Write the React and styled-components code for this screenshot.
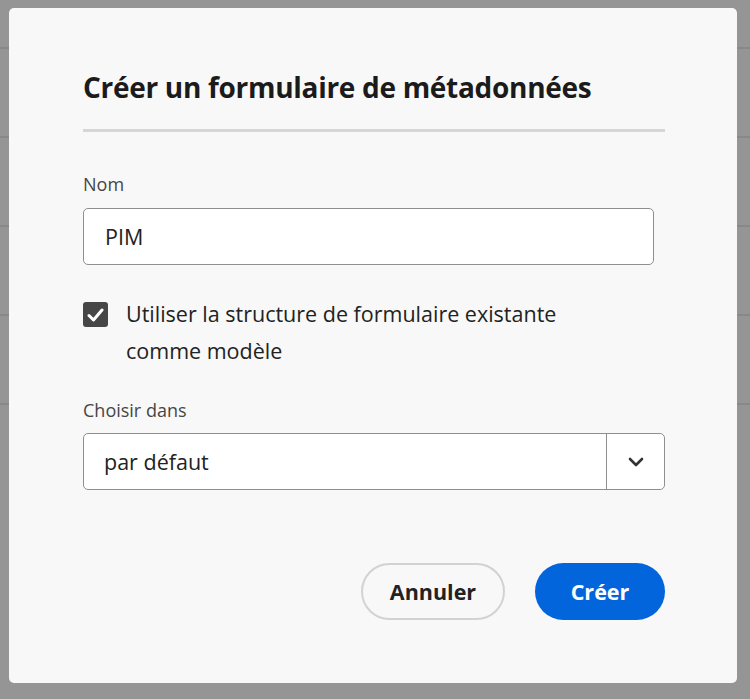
import React from "react";
import styled, { createGlobalStyle } from "styled-components";

const Global = createGlobalStyle`
  html, body { margin: 0; padding: 0; }
  body {
    width: 750px;
    height: 699px;
    overflow: hidden;
    background: #959595;
    font-family: "Open Sans", "Noto Sans", sans-serif;
  }
`;

const Page = styled.div`
  display: flex;
  flex-direction: column;
  height: 699px;
`;

const BgRow = styled.div`
  height: ${(p) => p.$h}px;
  border-bottom: 2px solid #888888;
  flex-shrink: 0;
`;

const Overlay = styled.div`
  position: fixed;
  inset: 0;
  display: flex;
  align-items: flex-start;
  padding: 8px 0 0 9px;
`;

const Dialog = styled.div`
  width: 728px;
  height: 675px;
  box-sizing: border-box;
  background: #f8f8f8;
  border-radius: 5px;
  padding: 61px 72px 63px 74px;
  display: flex;
  flex-direction: column;
  color: #222;
`;

const Title = styled.h1`
  margin: 0;
  font-size: 28px;
  line-height: 36px;
  font-weight: 700;
  color: #1b1b1b;
  letter-spacing: -0.3px;
`;

const Divider = styled.hr`
  margin: 24px 0 0;
  border: 0;
  height: 3px;
  background: #d6d6d6;
`;

const Label = styled.label`
  display: block;
  margin-top: ${(p) => p.$mt}px;
  font-size: 18px;
  line-height: 24px;
  color: #464646;
`;

const TextField = styled.div`
  margin-top: 12px;
  width: 571px;
  height: 57px;
  box-sizing: border-box;
  border: 1px solid #8f8f8f;
  border-radius: 5px;
  background: #fff;
  display: flex;
  align-items: center;
  padding: 0 21px;
  font-size: 21.5px;
  color: #222;
`;

const CheckRow = styled.div`
  margin-top: 30px;
  display: flex;
  align-items: flex-start;
  gap: 18px;
`;

const Box = styled.span`
  flex-shrink: 0;
  margin-top: 7px;
  width: 25px;
  height: 25px;
  border-radius: 3px;
  background: #464646;
  display: flex;
  align-items: center;
  justify-content: center;
`;

const CheckText = styled.span`
  font-size: 21.5px;
  line-height: 37px;
  color: #222;
  width: 460px;
`;

const Picker = styled.div`
  margin-top: 11px;
  height: 57px;
  box-sizing: border-box;
  border: 1px solid #8f8f8f;
  border-radius: 5px;
  background: #fff;
  display: flex;
  align-items: stretch;
`;

const PickerValue = styled.div`
  flex: 1;
  display: flex;
  align-items: center;
  padding: 0 20px;
  font-size: 21.5px;
  color: #222;
`;

const PickerButton = styled.div`
  width: 57px;
  border-left: 1px solid #8f8f8f;
  display: flex;
  align-items: center;
  justify-content: center;
`;

const Footer = styled.div`
  margin-top: auto;
  display: flex;
  justify-content: flex-end;
  gap: 30px;
`;

const Button = styled.button`
  height: 57px;
  box-sizing: border-box;
  border-radius: 29px;
  padding: 0;
  font-family: inherit;
  font-size: 21.5px;
  font-weight: 700;
  border: ${(p) => (p.$primary ? "none" : "2px solid #d2d2d2")};
  background: ${(p) => (p.$primary ? "#0265dc" : "transparent")};
  color: ${(p) => (p.$primary ? "#fff" : "#222")};
  width: ${(p) => p.$w}px;
`;

export default function App() {
  return (
    <>
      <Global />
      <Page>
        <BgRow $h={47} />
        <BgRow $h={87} />
        <BgRow $h={87} />
        <BgRow $h={87} />
        <BgRow $h={87} />
      </Page>
      <Overlay>
        <Dialog>
          <Title>Créer un formulaire de métadonnées</Title>
          <Divider />
          <Label $mt={40}>Nom</Label>
          <TextField>PIM</TextField>
          <CheckRow>
            <Box>
              <svg width="17" height="14" viewBox="0 0 17 14">
                <path d="M2 7.5 L6.5 12 L15 2" fill="none" stroke="#fff" strokeWidth="3" strokeLinecap="round" strokeLinejoin="round" />
              </svg>
            </Box>
            <CheckText>Utiliser la structure de formulaire existante comme modèle</CheckText>
          </CheckRow>
          <Label $mt={29}>Choisir dans</Label>
          <Picker>
            <PickerValue>par défaut</PickerValue>
            <PickerButton>
              <svg width="16" height="10" viewBox="0 0 16 10">
                <path d="M2 2 L8 8 L14 2" fill="none" stroke="#333" strokeWidth="2.6" strokeLinecap="round" strokeLinejoin="round" />
              </svg>
            </PickerButton>
          </Picker>
          <Footer>
            <Button $w={144}>Annuler</Button>
            <Button $primary $w={130}>Créer</Button>
          </Footer>
        </Dialog>
      </Overlay>
    </>
  );
}
